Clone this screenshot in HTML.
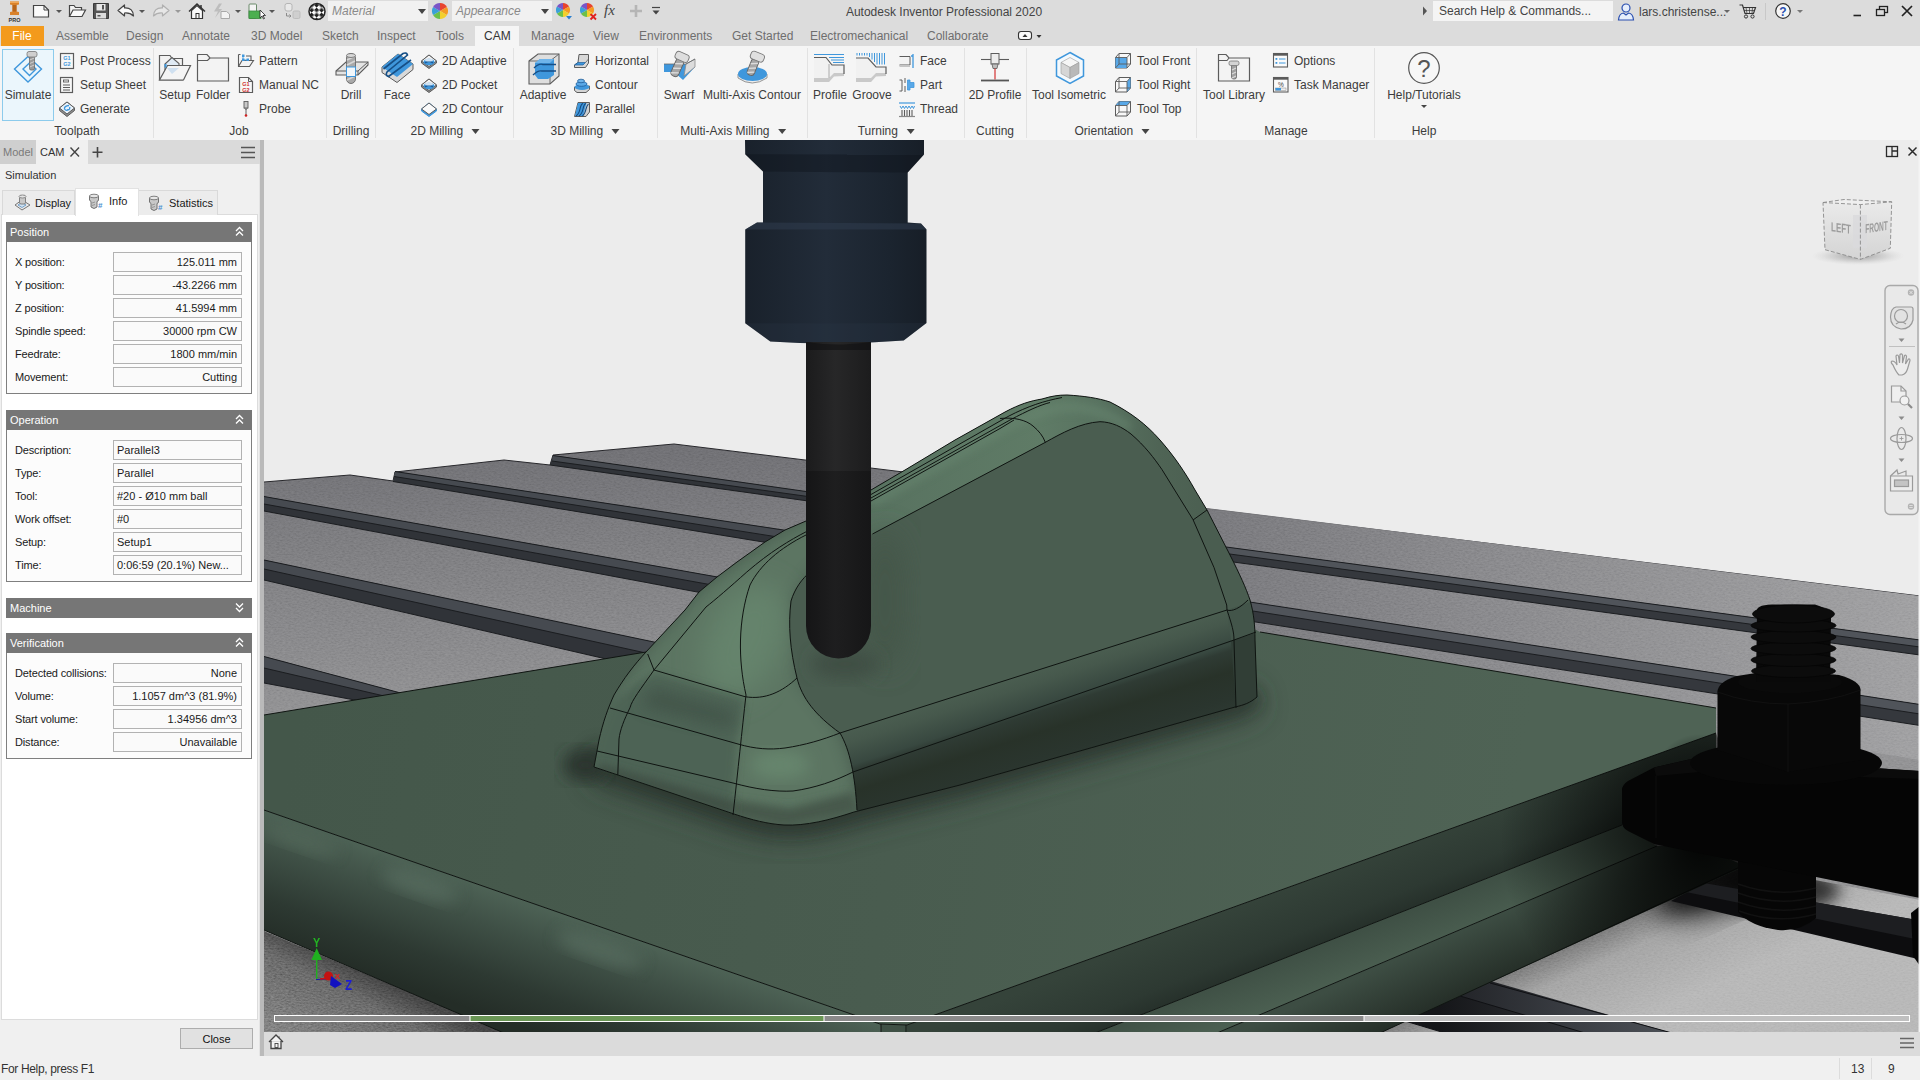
<!DOCTYPE html>
<html>
<head>
<meta charset="utf-8">
<title>Autodesk Inventor Professional 2020</title>
<style>
html,body{margin:0;padding:0;}
body{width:1920px;height:1080px;overflow:hidden;position:relative;background:#f0f0f0;font-family:"Liberation Sans",sans-serif;font-size:12px;color:#333;}
.abs{position:absolute;}
.t{position:absolute;white-space:nowrap;line-height:14px;}
#topbar{left:0;top:0;width:1920px;height:46px;background:#dcdcdc;}
#ribbon{left:0;top:46px;width:1920px;height:94px;background:#f5f5f5;}
.tab{position:absolute;top:28px;color:#6a6a6a;font-size:12px;line-height:14px;white-space:nowrap;}
.rb{position:absolute;font-size:12px;line-height:14px;color:#3c3c3c;white-space:nowrap;}
.rc{position:absolute;font-size:12px;line-height:14px;color:#3c3c3c;white-space:nowrap;transform:translateX(-50%);}
.sep{position:absolute;top:48px;width:1px;height:90px;background:#e2e2e2;}
#lpanel{left:0;top:140px;width:259px;height:916px;background:#f0f0f0;}
.fld{position:absolute;left:113px;width:127px;height:18px;border:1px solid #b2b2b2;background:#fafafa;font-size:11px;line-height:19px;color:#1a1a1a;white-space:nowrap;overflow:hidden;}
.fr{text-align:right;}
.fr span{padding-right:4px;}
.fl span{padding-left:3px;}
.lab{position:absolute;left:15px;font-size:11px;line-height:13px;color:#1a1a1a;white-space:nowrap;letter-spacing:-0.15px;}
.hdr{position:absolute;left:6px;width:246px;height:20px;background:#767676;color:#fff;font-size:11px;line-height:20px;}
.hdr span{padding-left:4px;}
.gb{position:absolute;left:6px;width:244px;border:1px solid #7f7f7f;border-top:none;background:#fcfcfc;}
</style>
</head>
<body>
<div id="topbar" class="abs"></div>
<div id="ribbon" class="abs"></div>
<div id="lpanel" class="abs"></div>
<svg class="abs" style="left:264px;top:140px" width="1656" height="892" viewBox="264 140 1656 892">
<defs>
<linearGradient id="gTable" gradientUnits="userSpaceOnUse" x1="500" y1="440" x2="1500" y2="1050">
<stop offset="0" stop-color="#6c6c70"/><stop offset="0.35" stop-color="#858588"/><stop offset="0.7" stop-color="#9c9c9e"/><stop offset="1" stop-color="#bdbdbd"/>
</linearGradient>
<linearGradient id="gHolder" gradientUnits="userSpaceOnUse" x1="745" y1="0" x2="926" y2="0">
<stop offset="0" stop-color="#19212b"/><stop offset="0.45" stop-color="#222c39"/><stop offset="0.8" stop-color="#1b242f"/><stop offset="1" stop-color="#171e27"/>
</linearGradient>
<linearGradient id="gTool" gradientUnits="userSpaceOnUse" x1="806" y1="0" x2="871" y2="0">
<stop offset="0" stop-color="#1b1b1c"/><stop offset="0.45" stop-color="#272728"/><stop offset="1" stop-color="#1c1c1d"/>
</linearGradient>
<linearGradient id="gTool2" gradientUnits="userSpaceOnUse" x1="806" y1="0" x2="871" y2="0">
<stop offset="0" stop-color="#151516"/><stop offset="0.45" stop-color="#1e1e1f"/><stop offset="1" stop-color="#161617"/>
</linearGradient>
<filter id="b4" x="-20%" y="-20%" width="140%" height="140%"><feGaussianBlur stdDeviation="4"/></filter>
<filter id="b8" x="-20%" y="-20%" width="140%" height="140%"><feGaussianBlur stdDeviation="8"/></filter>
<filter id="b14" x="-30%" y="-30%" width="160%" height="160%"><feGaussianBlur stdDeviation="14"/></filter>
<filter id="b25" x="-40%" y="-40%" width="180%" height="180%"><feGaussianBlur stdDeviation="25"/></filter>
<clipPath id="cBoss"><path d="M594,767 L599,740 C603,722 608,708 614,695 C624,678 634,665 646,652 L685,610 L699,592 L717,577 L737,562 L765,542 L785,530 L806,521 L871,490 L905,470 L955,440 L1005,412 C1020,404 1030,401 1042,399 C1052,396 1058,395 1067,395 C1084,396 1098,398 1110,402 C1130,412 1146,424 1160,440 C1174,456 1185,472 1195,490 L1207,510 L1230,555 C1240,575 1246,588 1250,600 C1254,614 1255,626 1255,640 L1257,697 C1250,703 1244,705 1235,707 L960,785 L854,812 C830,820 806,826 784,825 C768,824 752,820 734,814 Z"/></clipPath>
<clipPath id="cPlate"><path d="M264,715 L646,652 L700,600 L1200,600 L1260,632 L1716,708 L1716,733 L907,1025 L880,1024 L264,810 Z"/></clipPath>
<clipPath id="cView"><rect x="264" y="140" width="1656" height="892"/></clipPath>
</defs>
<g clip-path="url(#cView)">
<rect x="264" y="140" width="1656" height="892" fill="#ececec"/>
<g id="table">
<defs>
<linearGradient id="gSlotLR" gradientUnits="userSpaceOnUse" x1="1460" y1="0" x2="1680" y2="0"><stop offset="0" stop-color="#232529"/><stop offset="0.5" stop-color="#3a3d43"/><stop offset="1" stop-color="#4e5258"/></linearGradient>
<linearGradient id="gTableBack" gradientUnits="userSpaceOnUse" x1="1200" y1="0" x2="1920" y2="0"><stop offset="0" stop-color="#737377"/><stop offset="1" stop-color="#9b9b9d"/></linearGradient>
<linearGradient id="gTableV" gradientUnits="userSpaceOnUse" x1="0" y1="450" x2="0" y2="720"><stop offset="0" stop-color="#6b6b6f"/><stop offset="0.4" stop-color="#79797c"/><stop offset="1" stop-color="#8c8c8e"/></linearGradient>
<linearGradient id="gTableBL" gradientUnits="userSpaceOnUse" x1="380" y1="980" x2="340" y2="1060"><stop offset="0" stop-color="#3c3c3c"/><stop offset="0.3" stop-color="#5c5c5c"/><stop offset="1" stop-color="#707070"/></linearGradient>
<linearGradient id="gTableLR" gradientUnits="userSpaceOnUse" x1="1560" y1="949" x2="1600" y2="1037"><stop offset="0" stop-color="#747474"/><stop offset="0.3" stop-color="#a0a0a0"/><stop offset="1" stop-color="#b4b4b4"/></linearGradient>
<radialGradient id="gUnderClamp" gradientUnits="userSpaceOnUse" cx="1740" cy="870" r="120"><stop offset="0" stop-color="#000" stop-opacity="0.85"/><stop offset="0.5" stop-color="#000" stop-opacity="0.4"/><stop offset="1" stop-color="#000" stop-opacity="0"/></radialGradient>
<clipPath id="cTableLR"><path d="M1380,1033 L1742,866 L1815,880 L1920,900 L1920,1033 Z"/></clipPath>
<linearGradient id="gSlotLR2" gradientUnits="userSpaceOnUse" x1="1440" y1="0" x2="1640" y2="0"><stop offset="0" stop-color="#151619"/><stop offset="0.5" stop-color="#2a2c30"/><stop offset="1" stop-color="#3c3f45"/></linearGradient>
<filter id="noise" x="0" y="0" width="100%" height="100%"><feTurbulence type="fractalNoise" baseFrequency="0.35 0.7" numOctaves="2" seed="7"/><feColorMatrix type="matrix" values="0.9 0 0 0 0  0.9 0 0 0 0  0.9 0 0 0 0  0 0 0 0 1"/></filter>
<clipPath id="cTableAll"><path d="M264,482 L350,475 L393,481 L395,472 L504,460 L550,465 L553,455 L674,444 L1920,596 L1920,1033 L264,1033 Z"/></clipPath>
</defs>
<path d="M264,482 L350,475 L393,481 L395,472 L504,460 L550,465 L553,455 L674,444 L1920,596 L1920,1033 L264,1033 Z" fill="url(#gTableV)"/>
<path d="M264,931 L506,1033 L264,1033 Z" fill="url(#gTableBL)"/>
<g style="mix-blend-mode:overlay" opacity="0.25"><path d="M264,931 L506,1033 L264,1033 Z" filter="url(#noise)"/></g>
<path d="M1300,1033 L1700,840 L1815,880 L1920,900 L1920,1033 Z" fill="url(#gTableLR)"/>
<path d="M264,482 L350,475 L393,481 L395,472 L504,460 L550,465 L553,455 L674,444 L1920,596" fill="none" stroke="#26262a" stroke-width="1"/>
<path d="M1190,506 L1920,596 L1920,760 L1190,640 Z" fill="url(#gTableBack)"/>
<g clip-path="url(#cTableAll)" style="mix-blend-mode:overlay" opacity="0.16"><rect x="264" y="440" width="1656" height="593" filter="url(#noise)"/></g>
<!-- slot 2-3 -->
<path d="M553,455.5 L880,502 L880,511 L550,465 Z" fill="#303338"/>
<path d="M553,455.5 L880,502 L880,506.5 L552,461 Z" fill="#464a50"/>
<!-- slot 1-2 -->
<path d="M395,471.5 L800,532.5 L800,548 L393,481.5 Z" fill="#303338"/>
<path d="M395,471.5 L800,532.5 L800,540.5 L394,476.5 Z" fill="#464a50"/>
<!-- slot 0-1 -->
<path d="M264,496.5 L740,581 L740,600 L264,511 Z" fill="#303338"/>
<path d="M264,496.5 L740,581 L740,590 L264,504 Z" fill="#464a50"/>
<!-- slot -1-0 -->
<path d="M264,560 L680,647.5 L680,676 L264,580 Z" fill="#303338"/>
<path d="M264,560 L680,647.5 L680,660.5 L264,569 Z" fill="#464a50"/>
<!-- slot -2 -1 -->
<path d="M264,656.500 L440,703.500 L440,716 L264,683 Z" fill="#303338"/>
<path d="M264,656.500 L440,703.500 L440,709 L264,668 Z" fill="#464a50"/>
<g fill="none" stroke="#1b1d20" stroke-width="1">
<path d="M553,455.5 L880,502 M552,461 L880,506.5 M550,465 L880,511"/>
<path d="M395,471.5 L800,532.5 M394,476.5 L800,540.5 M393,481.5 L800,548"/>
<path d="M264,496.5 L740,581 M264,504 L740,590 M264,511 L740,600"/>
<path d="M264,560 L680,647.5 M264,569 L680,660.5 M264,580 L680,676"/>
<path d="M264,656.500 L440,703.500 M264,668 L440,709 M264,683 L440,716"/>
</g>
<!-- right slots -->
<path d="M1200,543.5 L1920,640 L1920,655 L1200,557.5 Z" fill="#35383d"/>
<path d="M1200,543.5 L1920,640 L1920,647 L1200,550 Z" fill="#50545a"/>
<path d="M1230,599 L1920,704.5 L1920,725.5 L1230,618 Z" fill="#35383d"/>
<path d="M1230,599 L1920,704.5 L1920,714 L1230,607.5 Z" fill="#50545a"/>
<g fill="none" stroke="#1b1d20" stroke-width="1">
<path d="M1200,543.5 L1920,640 M1200,550 L1920,647 M1200,557.5 L1920,655"/>
<path d="M1230,599 L1920,704.5 M1230,607.5 L1920,714 M1230,618 L1920,725.5"/>
</g>
<g clip-path="url(#cTableLR)"><ellipse cx="1735" cy="872" rx="85" ry="30" fill="#000" opacity="0.9" filter="url(#b14)" transform="rotate(-24 1735 872)"/><ellipse cx="1780" cy="890" rx="60" ry="22" fill="#000" opacity="0.7" filter="url(#b8)"/></g>
<!-- lower right slots -->
<path d="M1704,883 L1920,920.500 L1920,959.500 L1671,901 Z" fill="#0d0d0f"/>
<path d="M1704,883 L1920,920.500 L1920,940 L1686,892 Z" fill="#1d1e21"/>
<path d="M1480,978 L1672,1033 L1445,1033 L1395,1018 Z" fill="url(#gSlotLR2)"/>
<path d="M1480,978 L1490,983 L1672,1033 L1585,1033 L1460,996 L1450,990 Z" fill="url(#gSlotLR)"/>
<path d="M1490,983 L1672,1033 M1460,996 L1585,1033 M1405,1021 L1445,1033" stroke="#101114" stroke-width="1" fill="none"/>
</g>

<g id="plate">
<defs>
<linearGradient id="gPlateTop" gradientUnits="userSpaceOnUse" x1="300" y1="700" x2="1500" y2="900">
<stop offset="0" stop-color="#44574a"/><stop offset="0.5" stop-color="#495c4f"/><stop offset="1" stop-color="#4f6355"/>
</linearGradient>
<linearGradient id="gPlateFront" gradientUnits="userSpaceOnUse" x1="600" y1="925" x2="560" y2="1040">
<stop offset="0" stop-color="#4e6356"/><stop offset="0.3" stop-color="#3f5046"/><stop offset="0.7" stop-color="#2d3932"/><stop offset="1" stop-color="#242d27"/>
</linearGradient>
<linearGradient id="gFace1" gradientUnits="userSpaceOnUse" x1="1300" y1="880" x2="1330" y2="955">
<stop offset="0" stop-color="#35433a"/><stop offset="0.6" stop-color="#2d3932"/><stop offset="1" stop-color="#212a25"/>
</linearGradient>
<linearGradient id="gLedge" gradientUnits="userSpaceOnUse" x1="1400" y1="915" x2="1415" y2="955">
<stop offset="0" stop-color="#3f5045"/><stop offset="1" stop-color="#4b5f51"/>
</linearGradient>
<linearGradient id="gFace2" gradientUnits="userSpaceOnUse" x1="1450" y1="935" x2="1480" y2="1000">
<stop offset="0" stop-color="#3d4d43"/><stop offset="1" stop-color="#212923"/>
</linearGradient>
<radialGradient id="gClampSh" gradientUnits="userSpaceOnUse" cx="1700" cy="840" r="200">
<stop offset="0" stop-color="#000" stop-opacity="0.95"/><stop offset="0.45" stop-color="#000" stop-opacity="0.55"/><stop offset="1" stop-color="#000" stop-opacity="0"/>
</radialGradient>
<radialGradient id="gClampSh2" gradientUnits="userSpaceOnUse" cx="1700" cy="782" r="48">
<stop offset="0" stop-color="#000" stop-opacity="0.9"/><stop offset="0.5" stop-color="#000" stop-opacity="0.45"/><stop offset="1" stop-color="#000" stop-opacity="0"/>
</radialGradient>
</defs>
<!-- top -->
<path d="M264,715 L646,652 L700,600 L1200,600 L1260,632 L1716,708 L1716,733 L907,1025 L880,1024 L264,810 Z" fill="url(#gPlateTop)"/>
<g clip-path="url(#cPlate)">
<path d="M594,767 L734,814 C752,820 768,824 784,825 C806,826 830,820 854,812 L960,785 L1235,707 L1257,697" fill="none" stroke="#2d3932" stroke-width="30" filter="url(#b14)" opacity="0.7"/>
<path d="M596,750 L594,767 L734,814 C752,820 768,824 784,825 C806,826 830,820 854,812 L960,785 L1235,707 L1257,697" fill="none" stroke="#27322c" stroke-width="12" filter="url(#b8)" opacity="0.9"/>
<ellipse cx="585" cy="765" rx="22" ry="16" fill="#2a352e" filter="url(#b8)"/>
</g>
<!-- front-left face -->
<path d="M264,810 L880,1024 L881,1033 L504,1033 L264,930 Z" fill="url(#gPlateFront)"/>
<g opacity="0.8">
<ellipse cx="420" cy="885" rx="40" ry="12" fill="#566c5e" filter="url(#b8)" transform="rotate(19 420 885)"/>
<ellipse cx="600" cy="950" rx="45" ry="12" fill="#566c5e" filter="url(#b8)" transform="rotate(19 600 950)"/>
<ellipse cx="300" cy="840" rx="40" ry="10" fill="#52685a" filter="url(#b8)" transform="rotate(19 300 840)"/>
</g>
<!-- corner -->
<path d="M880,1024 L907,1025 L907,1033 L881,1033 Z" fill="#3f5045"/>
<!-- right faces -->
<path d="M907,1025 L1716,733 L1716,790 L1622,825 L1095,1033 L907,1033 Z" fill="url(#gFace1)"/>
<path d="M1095,1033 L1622,825 L1657,846 L1217,1033 Z" fill="url(#gLedge)"/>
<path d="M1217,1033 L1657,846 L1700,846 L1745,866 L1380,1033 Z" fill="url(#gFace2)"/>
<g fill="none" stroke="#101512" stroke-width="1">
<path d="M264,715 L646,652"/>
<path d="M1260,632 L1716,708"/>
<path d="M264,810 L880,1024 L907,1025 L1716,733"/>
<path d="M881,1024 L881,1033 M906,1025 L906,1033"/>
<path d="M1095,1033 L1622,825"/>
<path d="M1217,1033 L1657,846"/>
<path d="M1380,1033 L1742,866"/>
<path d="M264,930 L504,1033"/>
</g>
<!-- clamp shadow -->
<path d="M907,1025 L1716,733 L1760,850 L1745,866 L1380,1033 L907,1033 Z" fill="url(#gClampSh)"/>
<path d="M1400,655 L1716,708 L1716,733 L1450,829 Z" fill="url(#gClampSh2)"/>
</g>

<g id="boss">
<defs>
<linearGradient id="gSkirt" gradientUnits="userSpaceOnUse" x1="1000" y1="682" x2="1030.300" y2="777.300">
<stop offset="0" stop-color="#4a5d50"/><stop offset="0.12" stop-color="#46584c"/><stop offset="0.34" stop-color="#384840"/><stop offset="0.4" stop-color="#2f3b34"/><stop offset="0.6" stop-color="#283229"/><stop offset="0.85" stop-color="#2a352e"/><stop offset="1" stop-color="#2d3932"/>
</linearGradient>
<linearGradient id="gSkirtR" gradientUnits="userSpaceOnUse" x1="1180" y1="0" x2="1234" y2="0">
<stop offset="0" stop-color="#46594c" stop-opacity="0"/><stop offset="1" stop-color="#46594c" stop-opacity="0.9"/>
</linearGradient>
<linearGradient id="gRidge" gradientUnits="userSpaceOnUse" x1="870" y1="0" x2="1210" y2="0">
<stop offset="0" stop-color="#587260"/><stop offset="0.5" stop-color="#5f7b66"/><stop offset="0.68" stop-color="#587260"/><stop offset="0.85" stop-color="#4f6455"/><stop offset="1" stop-color="#4b5f51"/>
</linearGradient>
</defs>
<g clip-path="url(#cBoss)">
<rect x="580" y="380" width="700" height="460" fill="#4a5d50"/>
<!-- left slope lighter -->
<path d="M594,767 L614,695 L646,652 L699,592 L765,542 L806,521 L871,490 L1005,412 L1067,395 L1067,427 L874,531 L810,572 L791,601 L797,678 L840,733 L853,772 L857,810 L784,825 L734,814 Z" fill="#5b7562" filter="url(#b8)"/>
<ellipse cx="745" cy="640" rx="38" ry="60" fill="#65836c" filter="url(#b14)" transform="rotate(25 745 640)"/>
<ellipse cx="780" cy="765" rx="30" ry="14" fill="#66856d" filter="url(#b8)"/>
<ellipse cx="790" cy="810" rx="40" ry="8" fill="#5c7763" filter="url(#b4)"/>
<!-- darker fillet zones on left front -->
<path d="M654,672 L745,699 L737,744 L734,787 L733,818 L590,772 L597,738 L610,704 L630,688 Z" fill="#4e6355" filter="url(#b4)"/>
<path d="M652,688 L735,712 L732,728 L642,706 Z" fill="#43554a" filter="url(#b8)"/>
<path d="M733,800 L790,808 L853,792 L857,812 L784,827 L733,816 Z" fill="#46594c" filter="url(#b4)"/>
<path d="M600,764 L735,802 L734,816 L594,772 Z" fill="#3f5045" filter="url(#b4)"/>
<!-- top ridge highlight -->
<path d="M860,496 L905,470 L955,440 L1005,412 C1020,404 1030,401 1042,399 C1052,396 1058,395 1067,395 C1084,396 1098,398 1110,402 C1130,412 1146,424 1160,440 C1174,456 1185,472 1195,490 L1207,510 L1193,519.6 L1162,469.6 C1154,458 1145,446 1131,434 C1122,427 1112,422 1100,421.7 C1080,423 1062,433 1045,442.5 L860,540 Z" fill="url(#gRidge)"/>
<path d="M871,503 L1010,425 C1030,415 1050,408 1068,407 C1090,407 1110,414 1130,428" fill="none" stroke="#6a8972" stroke-width="9" opacity="0.55" filter="url(#b4)"/>
<!-- big side face -->
<path d="M872.5,534 L1045,442.5 C1062,433 1080,423 1100,421.7 C1112,422 1122,427 1131,434 C1145,446 1154,458 1162,469.6 L1193,519.6 L1214,567.5 L1226.7,605 L1227,610 L840,733 C815,715 802,698 797,678 C790,650 788,625 791,601 C795,588 802,579 810,572 Z" fill="#4a5d50"/>
<!-- tool shadow -->
<ellipse cx="885" cy="600" rx="22" ry="70" fill="#44564a" filter="url(#b14)"/>
<ellipse cx="845" cy="664" rx="34" ry="16" fill="#3f5045" filter="url(#b8)"/>
<!-- skirt bands -->
<path d="M840,733 L1227,610 L1265,700 L857,818 C857,790 852,755 840,733 Z" fill="url(#gSkirt)"/>
<path d="M1227,610 L1256,600 L1258,632 L1231,641 Z" fill="#43554a"/>
<path d="M1231,641 L1258,632 L1262,700 L1236,708 Z" fill="#313e36"/>
</g>
<g fill="none" stroke="#0f1411" stroke-width="1">
<path d="M594,767 L599,740 C603,722 608,708 614,695 C624,678 634,665 646,652 L685,610 L699,592 L717,577 L737,562 L765,542 L785,530 L806,521 L871,490 L905,470 L955,440 L1005,412 C1020,404 1030,401 1042,399 C1052,396 1058,395 1067,395 C1084,396 1098,398 1110,402 C1130,412 1146,424 1160,440 C1174,456 1185,472 1195,490 L1207,510 L1230,555 C1240,575 1246,588 1250,600 C1254,614 1255,626 1255,640 L1257,697 C1250,703 1244,705 1235,707 L960,785 L854,812 C830,820 806,826 784,825 C768,824 752,820 734,814 Z"/>
<!-- side face outline -->
<path d="M872.5,534 L1045,442.5 C1062,433 1080,423 1100,421.7 C1112,422 1122,427 1131,434 C1145,446 1154,458 1162,469.6 L1193,519.6 L1214,567.5 L1226.7,605 L1227,610 L840,733 C815,715 802,698 797,678 C790,650 788,625 791,601 C795,588 802,579 810,572"/>
<!-- upper edge second line -->
<path d="M871,494.500 L1008,416.500 C1028,406 1044,401 1062,397.500"/>
<path d="M871,498 L1010,420 C1028,410.500 1040,405 1050,402.500"/>
<path d="M871,501 L1000,428.500 L1014,420"/>
<path d="M1000,418.500 C1014,417 1026,420 1033,426 C1039,431 1043,436 1045.400,442.500"/>
<path d="M1193,520 L1207,510"/>
<path d="M1227,610 C1232,612 1240,608 1248,600"/>
<path d="M1227,610 C1232,625 1234,632 1234,640 L1236,708"/>
<path d="M853,772 L1234,640 L1256,632"/>
<!-- left front lines -->
<path d="M654,670 L745,696.700 C765,700 782,692 797,678"/>
<path d="M647.700,654 L654,670"/>
<path d="M610,708 L738,744 C755,749 770,750 785,748 C805,745 822,740 840,733"/>
<path d="M597,751 L733,783 C755,789 775,792 793,791 C815,788 835,781 853,772"/>
<path d="M654,670 C640,690 632,700 630,707.700 C624,720 620,730 619,739 L617.800,775"/>
<path d="M746,695 C742,730 738,770 733,815"/>
<path d="M840,733 C850,750 855,775 857,810"/>
<path d="M654,670 L706,607 C715,600 730,587 746.800,572 C770,552 790,540 806.600,531.500"/>
<path d="M746,695 C738,660 738,620 750,585 C760,565 780,548 806,535"/>
</g>
</g>

<g id="tool">
<path d="M745,140 L924,140 L924,154.500 L907.700,172.500 L907.700,222.500 L921,223.500 L926.500,229.600 L926.500,323 L903.700,340.600 Q835,346 770.300,341.600 L745.200,323.300 L745.200,229.600 L757,222.500 L763,222.500 L763,171.600 L745.200,154.300 Z" fill="url(#gHolder)"/>
<path d="M745.200,154.300 L763,171.600 L907.700,172.500 L924,154.500 Z" fill="#0d1218" opacity="0.4"/>
<path d="M757,222.500 L921,223.500 L926.500,229.600 L745.200,229.600 Z" fill="#303d4e" opacity="0.55"/>
<path d="M745.200,323.300 L926.500,323 L903.700,340.600 Q835,346 770.300,341.600 Z" fill="#2a3646" opacity="0.25"/>
<rect x="806" y="342" width="65" height="130" fill="url(#gTool)"/>
<path d="M806,471 L871,471 L871,626 A32.500,32.500 0 0 1 806,626 Z" fill="url(#gTool2)"/>
<path d="M806,342 Q838,347 871,342 L871,350 L806,350 Z" fill="#0c0c0d" opacity="0.5"/>
</g>

<g id="clamp">
<!-- lower bolt -->
<path d="M1738,850 L1816,850 L1816,918 Q1800,932 1778,930 Q1750,926 1738,912 Z" fill="#060606"/>
<g fill="none" stroke="#111" stroke-width="1.5">
<path d="M1738,884 Q1777,898 1816,888"/><path d="M1738,893 Q1777,907 1816,897"/><path d="M1738,902 Q1777,916 1816,906"/><path d="M1739,911 Q1777,925 1816,914"/>
</g>
<!-- clamp bar -->
<path d="M1622,790 Q1622,785 1628,781 L1654,767.500 L1700,757 L1920,771 L1920,898 L1654,844 L1628,831 Q1622,828 1622,822 Z" fill="#050505"/>
<path d="M1654,767.500 L1700,757 L1920,771 L1920,779 L1700,772 L1656,776 Z" fill="#0b0b0b"/>
<path d="M1656,776 L1656,838" stroke="#0e0e0e" stroke-width="1"/>
<!-- washer -->
<ellipse cx="1786" cy="763" rx="96" ry="22" fill="#070707"/>
<!-- nut -->
<path d="M1717.500,692 Q1717.500,682 1737,676 L1775,670 L1839,675 Q1860.500,681 1860.500,690 L1860.500,760 L1788,772 L1717.500,750 Z" fill="#080808"/>
<path d="M1788,704 L1788,772" stroke="#101010" stroke-width="1"/>
<path d="M1717.500,692 Q1750,704 1788,704 Q1830,702 1860.500,690" fill="none" stroke="#111" stroke-width="1"/>
<ellipse cx="1790" cy="682" rx="52" ry="11" fill="#0a0a0a"/>
<!-- thread -->
<path d="M1757,612 Q1755,605 1772,604.500 L1815,604.500 Q1833,610 1831,618 L1830,682 L1756,682 Z" fill="#090909"/>
<g fill="#0c0c0c" stroke="#050505" stroke-width="0.8">
<ellipse cx="1793.500" cy="671" rx="42" ry="6.500"/>
<ellipse cx="1793.500" cy="660" rx="42.500" ry="6.500"/>
<ellipse cx="1793.500" cy="648.500" rx="42.500" ry="6.500"/>
<ellipse cx="1793.500" cy="637" rx="42.500" ry="6.500"/>
<ellipse cx="1793.500" cy="625.500" rx="42.500" ry="6.500"/>
<ellipse cx="1793.500" cy="614" rx="41" ry="9"/>
</g>
<path d="M1911,913 L1920,906 L1920,966 L1913,956 Z" fill="#050505"/>
</g>

<g id="overlay">
<!-- triad -->
<g>
<path d="M316.7,959 L316.7,979" stroke="#1fb01f" stroke-width="1.4"/>
<path d="M316.7,948 L322,960 L311.4,960 Z" fill="#1fb01f"/>
<text x="0" y="0" font-family="Liberation Sans, sans-serif" font-size="12" font-weight="bold" fill="#22b422" text-anchor="middle" transform="translate(316.500 947) scale(0.9 1)">Y</text>
<path d="M316,979.5 L328,979" stroke="#1a1aa8" stroke-width="1.2"/>
<path d="M320,979 L331,978" stroke="#c81414" stroke-width="1.6"/>
<ellipse cx="328.5" cy="976" rx="4.5" ry="4.5" fill="#c41212"/>
<text x="337.5" y="979" font-family="Liberation Sans, sans-serif" font-size="8" font-weight="bold" fill="#e02020" text-anchor="middle">X</text>
<path d="M331,976 L342,984 L335,988 L330,985 Z" fill="#1212c0"/>
<text x="0" y="0" font-family="Liberation Sans, sans-serif" font-size="15" font-weight="bold" fill="#1c1cd8" text-anchor="middle" transform="translate(348.800 990) scale(0.75 1)">Z</text>
</g>
<!-- progress bar -->
<g>
<rect x="274.5" y="1015.5" width="1635" height="6" fill="#c0c0c0" stroke="#ffffff" stroke-width="1"/>
<rect x="275" y="1016" width="195" height="5" fill="#8c8c8c"/>
<rect x="470" y="1016" width="354" height="5" fill="#6a9655"/>
<rect x="824" y="1016" width="540" height="5" fill="#8a8a8a"/>
<rect x="469.5" y="1015" width="1" height="7" fill="#fff"/>
<rect x="823.5" y="1015" width="1" height="7" fill="#fff"/>
<rect x="1363.5" y="1015" width="1" height="7" fill="#fff"/>
</g>
<!-- right white strip -->
<rect x="1918.500" y="140" width="1.500" height="892" fill="#f4f4f4"/>
<!-- top-right icons -->
<g fill="none" stroke="#2a2a2a" stroke-width="1.3">
<rect x="1886.5" y="146.5" width="11" height="10"/>
<path d="M1892,146.5 L1892,156.5 M1892,151 L1897.5,151"/>
<path d="M1908.5,147.5 L1916.5,155.5 M1916.5,147.5 L1908.5,155.5" stroke-width="1.5"/>
</g>
<!-- view cube -->
<g>
<defs>
<radialGradient id="gCubeSh" cx="0.5" cy="0.5" r="0.5"><stop offset="0" stop-color="#8a8a8a" stop-opacity="0.85"/><stop offset="0.6" stop-color="#b0b0b0" stop-opacity="0.4"/><stop offset="1" stop-color="#d0d0d0" stop-opacity="0"/></radialGradient>
<linearGradient id="gCubeL" x1="0" y1="0" x2="0" y2="1"><stop offset="0" stop-color="#eaeaea"/><stop offset="1" stop-color="#d4d4d4"/></linearGradient>
</defs>
<ellipse cx="1858" cy="256" rx="46" ry="9" fill="url(#gCubeSh)"/>
<path d="M1823,202.5 L1860.4,204.6 L1860.4,259.4 L1825,249.7 Z" fill="url(#gCubeL)"/>
<path d="M1860.4,204.6 L1891.7,201.8 L1890.3,248.3 L1860.4,259.4 Z" fill="url(#gCubeL)"/>
<path d="M1823,202.5 L1844,199.5 L1891.7,201.8 L1860.4,204.6 Z" fill="#efefef"/>
<rect x="1853" y="215" width="14" height="33" fill="#d9dadc" opacity="0.8"/>
<g fill="none" stroke="#8a8a8a" stroke-width="0.9" stroke-dasharray="4 2">
<path d="M1823,202.5 L1860.4,204.6 L1891.7,201.8 L1890.3,248.3 L1860.4,259.4 L1825,249.7 Z"/>
<path d="M1860.4,204.6 L1860.4,259.4"/>
<path d="M1823,202.5 L1844,199.5 L1891.7,201.8"/>
</g>
<text x="0" y="3.500" font-family="Liberation Sans, sans-serif" font-size="10" font-weight="bold" fill="#9c9c9c" text-anchor="middle" transform="translate(1841 228) skewY(7) scale(0.8 1.3)">LEFT</text>
<text x="0" y="3.500" font-family="Liberation Sans, sans-serif" font-size="10" font-weight="bold" fill="#9c9c9c" text-anchor="middle" transform="translate(1876.500 227) skewY(-9) scale(0.66 1.3)">FRONT</text>
</g>
<!-- nav bar -->
<g>
<rect x="1885" y="285.5" width="33" height="229" rx="5" ry="5" fill="#e9e9e9" stroke="#a9a9a9" stroke-width="1.4"/>
<circle cx="1911" cy="292.5" r="3.2" fill="#b4b4b4"/><path d="M1909.5,291 L1912.5,294 M1912.5,291 L1909.5,294" stroke="#eee" stroke-width="0.8"/>
<circle cx="1911" cy="506.5" r="3.2" fill="#b4b4b4"/><path d="M1909.3,505.5 L1912.7,505.5 M1909.3,507.5 L1912.7,507.5" stroke="#eee" stroke-width="0.7"/>
<g fill="none" stroke="#9a9a9a" stroke-width="1.2">
<path d="M1896,307 L1911,307 Q1913,307 1913,309 L1913,320 Q1911,329 1901,329 Q1890.500,327 1890.500,317 Q1891,308 1896,307 Z" fill="#e2e2e2"/>
<circle cx="1901" cy="316" r="6.5"/>
<path d="M1896,324 Q1901,320 1906,324"/>
<path d="M1889,346.500 L1915,346.500" stroke-width="0.8" stroke="#b5b5b5"/>
<!-- hand -->
<path d="M1893,365 Q1890,362 1892,361 Q1895,361 1897,365 L1896,356 Q1897,354 1898.500,356 L1899.500,363 L1900,354.500 Q1901.500,353 1902.500,355 L1902.500,363 L1904.500,355.500 Q1906,354.500 1906.500,356.500 L1905.500,364 L1908.500,359 Q1910,358.500 1910,360.500 L1907.500,369 Q1906,374 1902,375 L1899,375 Q1896,372 1893,365 Z" fill="#ededed"/>
<!-- page zoom -->
<path d="M1891.500,386 L1901,386 L1906,391 L1906,402 L1891.500,402 Z" fill="#efefef"/>
<path d="M1901,386 L1901,391 L1906,391"/>
<circle cx="1904.500" cy="400.500" r="4.500" fill="#f2f2f2"/>
<path d="M1908,404 L1912,408" stroke-width="2.2" stroke="#8a8a8a"/>
<!-- orbit -->
<ellipse cx="1901.500" cy="438.500" rx="11" ry="4"/>
<ellipse cx="1901.500" cy="438.500" rx="4.500" ry="11"/>
<path d="M1899.500,438.500 L1903.500,438.500 M1901.500,436.500 L1901.500,440.500" stroke-width="0.9"/>
<!-- camera -->
<path d="M1890.500,476 L1912.500,476 L1912.500,491 L1890.500,491 Z" fill="#ececec"/>
<path d="M1890.500,476 L1897,470 L1898,474 L1906,471 L1906,476"/>
<rect x="1894.500" y="480" width="14" height="6.500" fill="#c4c4c4"/>
</g>
<g fill="#8c8c8c">
<path d="M1898.500,338.500 L1904.500,338.500 L1901.500,342 Z"/>
<path d="M1898.500,416.500 L1904.500,416.500 L1901.500,420 Z"/>
<path d="M1898.500,458.500 L1904.500,458.500 L1901.500,462 Z"/>
</g>
</g>
</g>

</g>
</svg>

<div class="abs" style="left:1px;top:26px;width:43px;height:20px;background:#f39a1c;"></div>
<div class="abs" style="left:475px;top:26px;width:44px;height:20px;background:#f5f5f5;"></div>
<div class="rc" style="left:22px;top:29px;color:#fff;">File</div>
<div class="rb" style="left:56px;top:29px;color:#6e6e6e;">Assemble</div>
<div class="rb" style="left:126px;top:29px;color:#6e6e6e;">Design</div>
<div class="rb" style="left:182px;top:29px;color:#6e6e6e;">Annotate</div>
<div class="rb" style="left:251px;top:29px;color:#6e6e6e;">3D Model</div>
<div class="rb" style="left:322px;top:29px;color:#6e6e6e;">Sketch</div>
<div class="rb" style="left:377px;top:29px;color:#6e6e6e;">Inspect</div>
<div class="rb" style="left:436px;top:29px;color:#6e6e6e;">Tools</div>
<div class="rb" style="left:484px;top:29px;color:#333;">CAM</div>
<div class="rb" style="left:531px;top:29px;color:#6e6e6e;">Manage</div>
<div class="rb" style="left:593px;top:29px;color:#6e6e6e;">View</div>
<div class="rb" style="left:639px;top:29px;color:#6e6e6e;">Environments</div>
<div class="rb" style="left:732px;top:29px;color:#6e6e6e;">Get Started</div>
<div class="rb" style="left:810px;top:29px;color:#6e6e6e;">Electromechanical</div>
<div class="rb" style="left:927px;top:29px;color:#6e6e6e;">Collaborate</div>
<div class="rc" style="left:944px;top:5px;color:#444;">Autodesk Inventor Professional 2020</div>
<div class="abs" style="left:1433px;top:1px;width:180px;height:20px;background:#f4f4f4;"></div>
<div class="rb" style="left:1439px;top:4px;color:#444;">Search Help &amp; Commands...</div>
<div class="rb" style="left:1639px;top:5px;color:#444;">lars.christense...</div>
<div class="rb" style="left:80px;top:53.5px;">Post Process</div>
<div class="rb" style="left:80px;top:77.5px;">Setup Sheet</div>
<div class="rb" style="left:80px;top:101.5px;">Generate</div>
<div class="rb" style="left:259px;top:53.5px;">Pattern</div>
<div class="rb" style="left:259px;top:77.5px;">Manual NC</div>
<div class="rb" style="left:259px;top:101.5px;">Probe</div>
<div class="rb" style="left:442px;top:53.5px;">2D Adaptive</div>
<div class="rb" style="left:442px;top:77.5px;">2D Pocket</div>
<div class="rb" style="left:442px;top:101.5px;">2D Contour</div>
<div class="rb" style="left:595px;top:53.5px;">Horizontal</div>
<div class="rb" style="left:595px;top:77.5px;">Contour</div>
<div class="rb" style="left:595px;top:101.5px;">Parallel</div>
<div class="rb" style="left:920px;top:53.5px;">Face</div>
<div class="rb" style="left:920px;top:77.5px;">Part</div>
<div class="rb" style="left:920px;top:101.5px;">Thread</div>
<div class="rb" style="left:1137px;top:53.5px;">Tool Front</div>
<div class="rb" style="left:1137px;top:77.5px;">Tool Right</div>
<div class="rb" style="left:1137px;top:101.5px;">Tool Top</div>
<div class="rb" style="left:1294px;top:53.5px;">Options</div>
<div class="rb" style="left:1294px;top:77.5px;">Task Manager</div>
<div class="abs" style="left:2px;top:49px;width:50px;height:70px;border:1px solid #8ccbec;background:#ebf6fc;"></div>
<div class="rc" style="left:28px;top:87.5px;">Simulate</div>
<div class="rc" style="left:175px;top:87.5px;">Setup</div>
<div class="rc" style="left:213px;top:87.5px;">Folder</div>
<div class="rc" style="left:351px;top:87.5px;">Drill</div>
<div class="rc" style="left:397px;top:87.5px;">Face</div>
<div class="rc" style="left:543px;top:87.5px;">Adaptive</div>
<div class="rc" style="left:679px;top:87.5px;">Swarf</div>
<div class="rc" style="left:752px;top:87.5px;">Multi-Axis Contour</div>
<div class="rc" style="left:830px;top:87.5px;">Profile</div>
<div class="rc" style="left:872px;top:87.5px;">Groove</div>
<div class="rc" style="left:995px;top:87.5px;">2D Profile</div>
<div class="rc" style="left:1069px;top:87.5px;">Tool Isometric</div>
<div class="rc" style="left:1234px;top:87.5px;">Tool Library</div>
<div class="rc" style="left:1424px;top:87.5px;">Help/Tutorials</div>
<div class="rc" style="left:77px;top:124px;">Toolpath</div>
<div class="rc" style="left:239px;top:124px;">Job</div>
<div class="rc" style="left:351px;top:124px;">Drilling</div>
<div class="rc" style="left:445px;top:124px;">2D Milling <span style="display:inline-block;width:0;height:0;border-left:4px solid transparent;border-right:4px solid transparent;border-top:5px solid #444;margin-left:5px;vertical-align:1px;"></span></div>
<div class="rc" style="left:585px;top:124px;">3D Milling <span style="display:inline-block;width:0;height:0;border-left:4px solid transparent;border-right:4px solid transparent;border-top:5px solid #444;margin-left:5px;vertical-align:1px;"></span></div>
<div class="rc" style="left:733px;top:124px;">Multi-Axis Milling <span style="display:inline-block;width:0;height:0;border-left:4px solid transparent;border-right:4px solid transparent;border-top:5px solid #444;margin-left:5px;vertical-align:1px;"></span></div>
<div class="rc" style="left:886px;top:124px;">Turning <span style="display:inline-block;width:0;height:0;border-left:4px solid transparent;border-right:4px solid transparent;border-top:5px solid #444;margin-left:5px;vertical-align:1px;"></span></div>
<div class="rc" style="left:995px;top:124px;">Cutting</div>
<div class="rc" style="left:1112px;top:124px;">Orientation <span style="display:inline-block;width:0;height:0;border-left:4px solid transparent;border-right:4px solid transparent;border-top:5px solid #444;margin-left:5px;vertical-align:1px;"></span></div>
<div class="rc" style="left:1286px;top:124px;">Manage</div>
<div class="rc" style="left:1424px;top:124px;">Help</div>
<div class="sep" style="left:153px;"></div>
<div class="sep" style="left:326px;"></div>
<div class="sep" style="left:375px;"></div>
<div class="sep" style="left:513px;"></div>
<div class="sep" style="left:657px;"></div>
<div class="sep" style="left:807px;"></div>
<div class="sep" style="left:964px;"></div>
<div class="sep" style="left:1026px;"></div>
<div class="sep" style="left:1196px;"></div>
<div class="sep" style="left:1374px;"></div>
<div class="abs" style="left:1421px;top:105px;width:0;height:0;border-left:3px solid transparent;border-right:3px solid transparent;border-top:3px solid #444;"></div>
<svg class="abs" style="left:11px;top:50px" width="36" height="36" viewBox="0 0 36 36"><path d="M17,6.500 L30.500,19 L17,32 L3.500,19 Z" fill="none" stroke="#3f97dc" stroke-width="1.4"/><path d="M18.500,13 L25,19 L18.500,25.500 L12,19 Z" fill="none" stroke="#3f97dc" stroke-width="1.4"/><rect x="18.500" y="6" width="5" height="14" rx="1.500" fill="#9a9a9a" stroke="#6a6a6a" stroke-width="0.8"/><path d="M18.800,10 L23.200,8 M18.800,13.500 L23.200,11.500 M18.800,17 L23.200,15" stroke="#d0d0d0" stroke-width="1"/><rect x="16" y="1.500" width="10" height="5.500" rx="2" fill="#cfcfcf" stroke="#777" stroke-width="0.8"/></svg>
<svg class="abs" style="left:59px;top:52px" width="17" height="18" viewBox="0 0 17 18"><rect x="1.500" y="1.500" width="13" height="15" fill="#f7f7f7" stroke="#5c5c5c" stroke-width="1.2"/><text x="8" y="8" font-family="Liberation Sans,sans-serif" font-size="5.500" font-weight="bold" fill="#3f97dc" text-anchor="middle">G1</text><text x="8" y="14" font-family="Liberation Sans,sans-serif" font-size="5.500" font-weight="bold" fill="#3f97dc" text-anchor="middle">G2</text></svg>
<svg class="abs" style="left:59px;top:76px" width="17" height="18" viewBox="0 0 17 18"><rect x="1.500" y="1.500" width="12" height="15" fill="#f7f7f7" stroke="#5c5c5c" stroke-width="1.2"/><rect x="4.500" y="4" width="5" height="2" fill="none" stroke="#5c5c5c" stroke-width="0.9"/><path d="M4,9 L11,9 M4,11.500 L11,11.500 M4,14 L11,14" stroke="#5c5c5c" stroke-width="1"/></svg>
<svg class="abs" style="left:58px;top:100px" width="18" height="18" viewBox="0 0 18 18"><path d="M1.500,8 L9,2 L16.500,8 L16.500,10.500 L9,16.500 L1.500,10.500 Z" fill="#8c8c8c" stroke="#5c5c5c" stroke-width="1"/><path d="M1.500,8 L9,2 L16.500,8 L9,14 Z" fill="#eaf3fb" stroke="#5c5c5c" stroke-width="1"/><path d="M11,5.500 Q6,6 6.500,9 Q8,11.500 11.500,9.500 M11.500,9.500 L11.800,7 M11.500,9.500 L9,9.800" fill="none" stroke="#3f97dc" stroke-width="1.3"/></svg>
<svg class="abs" style="left:158px;top:53px" width="34" height="30" viewBox="0 0 34 30"><path d="M1.500,2.500 L12,2.500 L14,5.500 L24.500,5.500 L24.500,27 L1.500,27 Z" fill="#f2f2f2" stroke="#5c5c5c" stroke-width="1.2"/><path d="M7,11 L14,4.500 L21,10.500 L21,17 L7,17 Z" fill="#dfeaf4" stroke="#5c5c5c" stroke-width="1.1"/><path d="M9.500,12.500 L32.500,12.500 L25.500,27 L1.500,27 Z" fill="#f4f4f4" stroke="#5c5c5c" stroke-width="1.2"/><path d="M9,15 L21,15 L14,21 Z" fill="#cfe0f0"/><rect x="6.500" y="11" width="2" height="3.500" fill="#3f97dc"/></svg>
<svg class="abs" style="left:196px;top:52px" width="34" height="32" viewBox="0 0 34 32"><path d="M1.500,2.500 L11,2.500 L14,6 L32.500,6 L32.500,29 L1.500,29 Z" fill="#f3f3f3" stroke="#5c5c5c" stroke-width="1.2"/><path d="M1.500,8.500 L11.500,8.500 L14,6" fill="none" stroke="#5c5c5c" stroke-width="1.2"/></svg>
<svg class="abs" style="left:237px;top:53px" width="18" height="16" viewBox="0 0 18 16"><path d="M1.500,1.500 L1.500,13.500 L12.500,13.500 L16.500,7.500 L5,7.500 L1.500,13.500" fill="#f4f4f4" stroke="#5c5c5c" stroke-width="1.1"/><path d="M1.500,1.500 L3.500,1.500 M9,3 L14,3 L14,7" fill="none" stroke="#5c5c5c" stroke-width="1.1"/><rect x="5" y="1.500" width="2.500" height="2.500" fill="#3f97dc"/><rect x="5" y="5.500" width="2.500" height="2.500" fill="#3f97dc"/><rect x="9.500" y="5.500" width="2.500" height="2.500" fill="#3f97dc"/><path d="M6,3 L6,7 L11,7" stroke="#3f97dc" stroke-width="0.8" fill="none"/></svg>
<svg class="abs" style="left:238px;top:76px" width="17" height="18" viewBox="0 0 17 18"><path d="M1.500,1.500 L10.500,1.500 L14.500,5.500 L14.500,16.500 L1.500,16.500 Z" fill="#f7f7f7" stroke="#5c5c5c" stroke-width="1.2"/><path d="M10.500,1.500 L10.500,5.500 L14.500,5.500" fill="none" stroke="#5c5c5c" stroke-width="1"/><text x="8" y="10" font-family="Liberation Sans,sans-serif" font-size="5.500" font-weight="bold" fill="#d03030" text-anchor="middle">G1</text><text x="8" y="15.500" font-family="Liberation Sans,sans-serif" font-size="5.500" font-weight="bold" fill="#d03030" text-anchor="middle">G2</text></svg>
<svg class="abs" style="left:240px;top:100px" width="12" height="18" viewBox="0 0 12 18"><rect x="4" y="1.500" width="4" height="6.500" fill="#c8c8c8" stroke="#5c5c5c" stroke-width="0.9"/><path d="M4.500,8 L6,10 L7.500,8" fill="#888" stroke="#5c5c5c" stroke-width="0.7"/><path d="M6,10 L6,15" stroke="#555" stroke-width="0.9"/><circle cx="6" cy="15.500" r="1.300" fill="#d02020"/></svg>
<svg class="abs" style="left:334px;top:51px" width="36" height="36" viewBox="0 0 36 36"><path d="M2,20 L12,11 L34,11 L34,14 L24,24 L2,24 Z" fill="#e4e4e4" stroke="#5c5c5c" stroke-width="1.1"/><path d="M2,20 L24,20 L34,11 M24,20 L24,24" fill="none" stroke="#5c5c5c" stroke-width="1"/><rect x="12.500" y="2.500" width="9" height="30" rx="4.500" fill="#a9a9a9" stroke="#6a6a6a" stroke-width="0.9"/><path d="M13,9 L21,5 M13,14 L21,10 M13,29 L21,25" stroke="#d6d6d6" stroke-width="1.6"/><rect x="12.500" y="16" width="9" height="9.500" fill="#f2f7fb" stroke="#3f97dc" stroke-width="1"/><ellipse cx="17" cy="4.500" rx="4.500" ry="2" fill="#d8d8d8" stroke="#6a6a6a" stroke-width="0.8"/></svg>
<svg class="abs" style="left:380px;top:50px" width="36" height="36" viewBox="0 0 36 36"><path d="M2,17 L18,4 L33,14 L33,19.500 L17,32.500 L2,22.500 Z" fill="#d9d9d9" stroke="#5c5c5c" stroke-width="1"/><path d="M2,17 L18,4 L33,14 L17,27 Z" fill="#3f97dc"/><path d="M3.500,19 L23,3.500 Q26.500,2 27.500,5 L7,22 Q5,25.500 8.500,26.500 L31,10" fill="none" stroke="#164f86" stroke-width="1.6"/><path d="M8,13 L24,24" stroke="#164f86" stroke-width="0" /></svg>
<svg class="abs" style="left:420px;top:53px" width="18" height="17" viewBox="0 0 18 17"><path d="M1.500,8 L9,2 L16.500,8 L16.500,10 L9,15.500 L1.500,10 Z" fill="#8a8a8a" stroke="#5c5c5c" stroke-width="1"/><path d="M1.500,8 L9,2 L16.500,8 L9,13.500 Z" fill="#f2f2f2" stroke="#5c5c5c" stroke-width="1"/><ellipse cx="9" cy="9" rx="5.500" ry="3.200" fill="#3f97dc"/><path d="M5,10 Q9,6.500 13,10" fill="none" stroke="#1d5c99" stroke-width="1.3"/><ellipse cx="9" cy="7" rx="4" ry="1.600" fill="#cfe2f3"/></svg>
<svg class="abs" style="left:420px;top:77px" width="18" height="17" viewBox="0 0 18 17"><path d="M1.500,8 L9,2 L16.500,8 L16.500,10 L9,15.500 L1.500,10 Z" fill="#8a8a8a" stroke="#5c5c5c" stroke-width="1"/><path d="M1.500,8 L9,2 L16.500,8 L9,13.500 Z" fill="#f2f2f2" stroke="#5c5c5c" stroke-width="1"/><ellipse cx="9" cy="9" rx="5.500" ry="3.200" fill="#3f97dc"/><path d="M5,10 Q9,6.500 13,10" fill="none" stroke="#1d5c99" stroke-width="1.3"/><ellipse cx="9" cy="7" rx="4" ry="1.600" fill="#cfe2f3"/></svg>
<svg class="abs" style="left:420px;top:101px" width="18" height="17" viewBox="0 0 18 17"><path d="M1.500,8 L9,2 L16.500,8 L16.500,10 L9,15.500 L1.500,10 Z" fill="#3f97dc" stroke="#3f97dc" stroke-width="1"/><path d="M1.500,8 L9,2 L16.500,8 L9,13.500 Z" fill="#fafafa" stroke="#5c5c5c" stroke-width="1"/></svg>
<svg class="abs" style="left:526px;top:51px" width="36" height="36" viewBox="0 0 36 36"><path d="M3,10 L12,3 L33,3 L33,25 L24,33 L3,33 Z" fill="#dedede" stroke="#5c5c5c" stroke-width="1.1"/><path d="M3,10 L24,10 L33,3 M24,10 L24,33" fill="none" stroke="#5c5c5c" stroke-width="0.9"/><path d="M9,12 L14,8 L28,8 L28,24 L22,28 L12,28 L9,24 Z" fill="#3f97dc"/><path d="M9,12 L14,8 L28,8 L24,12 Z" fill="#6fb4ea"/><path d="M8,17 Q13,12 17,13.500 L30,13.500 M7,24 Q12,19 16,20 L30,20" fill="none" stroke="#174e85" stroke-width="1.4"/></svg>
<svg class="abs" style="left:573px;top:53px" width="18" height="17" viewBox="0 0 18 17"><path d="M6,1.500 L15.500,1.500 L15.500,10 L12.500,14.500 L1.500,14.500 L1.500,12 L5,9.500 Z" fill="#d8d8d8" stroke="#5c5c5c" stroke-width="1"/><path d="M5,9.500 L12.500,9.500 L10,12 L1.500,12 Z" fill="#3f97dc" stroke="#1d5c99" stroke-width="0.7"/><path d="M12.500,9.500 L15.500,6" stroke="#5c5c5c" stroke-width="0.8"/></svg>
<svg class="abs" style="left:573px;top:77px" width="18" height="17" viewBox="0 0 18 17"><path d="M1.500,10 L1.500,13.500 L4,15.500 L13,15.500 L16.500,12.500 L16.500,9 Z" fill="#d4d4d4" stroke="#5c5c5c" stroke-width="1"/><ellipse cx="9" cy="10" rx="7.500" ry="3" fill="#3f97dc"/><ellipse cx="8.500" cy="7" rx="5.500" ry="2.300" fill="#5aa8e6" stroke="#1d5c99" stroke-width="0.8"/><ellipse cx="8" cy="4" rx="3.500" ry="1.800" fill="#6fb4ea" stroke="#1d5c99" stroke-width="0.8"/></svg>
<svg class="abs" style="left:573px;top:100px" width="18" height="18" viewBox="0 0 18 18"><path d="M5,2.500 L16.500,2.500 L16.500,12 L13,16.500 L1.500,16.500 Z" fill="#cfcfcf" stroke="#5c5c5c" stroke-width="1"/><path d="M5,3 L13.500,3 L10,16 L2,16 Z" fill="#3f97dc"/><path d="M3,16 Q6,14 7,9 Q8,4 10,3.500 M6,16 Q9,14 10,9 Q11,4 13,3.500 M9.500,16 Q12,14 13,9 Q14,5 15.500,4" fill="none" stroke="#14487c" stroke-width="1.1"/></svg>
<svg class="abs" style="left:662px;top:50px" width="36" height="36" viewBox="0 0 36 36"><path d="M2,14 L24,14 L33,9 L33,17 L21,30 L12,22 L2,22 Z" fill="#3f97dc"/><path d="M24,14 L33,9 L33,17 L22,26 Z" fill="#dcdcdc" stroke="#8a8a8a" stroke-width="0.8"/><path d="M2,14 L24,14 L33,9" fill="none" stroke="#6a6a6a" stroke-width="0.8"/><g transform="rotate(24 16 16)"><rect x="12" y="8" width="8" height="19" rx="3.500" fill="#a6a6a6" stroke="#666" stroke-width="0.9"/><path d="M12.500,15 L19.500,12 M12.500,20 L19.500,17 M12.500,25 L19.500,22" stroke="#dcdcdc" stroke-width="1.400"/><rect x="9" y="2" width="14" height="8" rx="3" fill="#dedede" stroke="#777" stroke-width="0.9"/></g></svg>
<svg class="abs" style="left:735px;top:49px" width="36" height="38" viewBox="0 0 36 38"><path d="M3,25 L3,29 Q17,39 32,29 L32,25 Z" fill="#ececec" stroke="#8a8a8a" stroke-width="0.9"/><ellipse cx="17.500" cy="25" rx="14.500" ry="7" fill="#3f97dc"/><g transform="rotate(22 19 16)"><rect x="15" y="9" width="7.500" height="18" rx="3.500" fill="#a6a6a6" stroke="#666" stroke-width="0.9"/><path d="M15.500,16 L22,13 M15.500,21 L22,18 M15.500,25.500 L22,22.500" stroke="#dcdcdc" stroke-width="1.400"/><rect x="12" y="3" width="14" height="8" rx="3" fill="#e0e0e0" stroke="#777" stroke-width="0.9"/></g></svg>
<svg class="abs" style="left:812px;top:52px" width="34" height="32" viewBox="0 0 34 32"><path d="M2,5.500 L14,5.500 L20,13 L32,13 L32,24 L22,24 L17,30 L2,30 Z" fill="#f1f1f1"/><path d="M2,26 L17,26 L22,21 L32,21 L32,24 L22,24.500 L17,30 L2,30 Z" fill="#c9c9c9"/><path d="M2,5.500 L14,5.500 L20,13 L32,13 L32,22" fill="none" stroke="#5c5c5c" stroke-width="1.200"/><path d="M17,26 L17,12" stroke="#999" stroke-width="0.8"/><path d="M2,2.500 L32,2.500 M17,5.500 L32,5.500 M19,8 L32,8 M21,10.500 L32,10.500" stroke="#3f97dc" stroke-width="1.100"/></svg>
<svg class="abs" style="left:854px;top:52px" width="34" height="32" viewBox="0 0 34 32"><path d="M2,6 L14,6 L22,15 L32,15 L32,24 L22,24 L17,30 L2,30 Z" fill="#f1f1f1"/><path d="M2,26 L17,26 L22,21 L32,21 L32,24 L22,24.500 L17,30 L2,30 Z" fill="#c9c9c9"/><path d="M2,6 L14,6 L22,15 L32,15 L32,22" fill="none" stroke="#5c5c5c" stroke-width="1.200"/><path d="M3,1 L3,3.500 M5.500,1 L5.500,3.500 M8,1 L8,3.500 M10.500,1 L10.500,3.500 M13,1 L13,3.500 M15.500,1 L15.500,5 M18,1 L18,7.500 M20.500,1 L20.500,10 M23,1 L23,12.500 M25.500,1 L25.500,12.500 M28,1 L28,12.500 M30.500,1 L30.500,12.500" stroke="#3f97dc" stroke-width="1"/><path d="M14,6 L22,15 L32,15" fill="none" stroke="#3f97dc" stroke-width="0" /></svg>
<svg class="abs" style="left:898px;top:53px" width="18" height="17" viewBox="0 0 18 17"><path d="M1.500,3.500 L12,3.500 L12,12 L1.500,12" fill="#f3f3f3" stroke="#5c5c5c" stroke-width="1"/><path d="M1.500,12 L12,12 L12,14 L1.500,14 Z" fill="#c4c4c4"/><path d="M15,1 L15,15 M13,3 L15,3" stroke="#3f97dc" stroke-width="1.300"/></svg>
<svg class="abs" style="left:898px;top:77px" width="18" height="17" viewBox="0 0 18 17"><path d="M1.500,3 L4,3 L4,14 L1.500,14" fill="none" stroke="#5c5c5c" stroke-width="1"/><path d="M7,1 L7,6 M7,9 L7,15" stroke="#5c5c5c" stroke-width="1"/><path d="M9.500,3 L9.500,13 L12,13 L12,10.500 L16,10.500 L16,5.500 L12,5.500 L12,3 Z" fill="#58a8e8" stroke="#3f97dc" stroke-width="0.8"/></svg>
<svg class="abs" style="left:898px;top:101px" width="18" height="17" viewBox="0 0 18 17"><path d="M1,2 L17,2" stroke="#3f97dc" stroke-width="1.200"/><path d="M2,5 L3.500,7.500 L5,5 L6.500,7.500 L8,5 L9.500,7.500 L11,5 L12.500,7.500 L14,5 L15.500,7.500 L16.500,5" fill="none" stroke="#3f97dc" stroke-width="1"/><path d="M4,15 L4,9 M6.500,15 L6.500,9 M9,15 L9,9 M11.500,15 L11.500,9 M14,15 L14,9" stroke="#5c5c5c" stroke-width="1.100"/><path d="M1,15.500 L17,15.500" stroke="#888" stroke-width="1.200"/></svg>
<svg class="abs" style="left:978px;top:52px" width="34" height="32" viewBox="0 0 34 32"><path d="M3,7.500 L31,7.500" stroke="#5c5c5c" stroke-width="1.100"/><rect x="13" y="1.500" width="8" height="10.500" fill="#ececec" stroke="#5c5c5c" stroke-width="1"/><path d="M14,12 L20,12 L19,16.500 L15,16.500 Z" fill="#bdbdbd" stroke="#5c5c5c" stroke-width="0.800"/><path d="M17,16.500 L17,27.500" stroke="#d02020" stroke-width="1.100"/><path d="M3,28.500 L31,28.500" stroke="#555" stroke-width="1.800"/></svg>
<svg class="abs" style="left:1052px;top:50px" width="36" height="36" viewBox="0 0 36 36"><path d="M18,2.500 L31.500,10 L31.500,26 L18,33.500 L4.500,26 L4.500,10 Z" fill="#f4f9fd" stroke="#3f97dc" stroke-width="1.500"/><path d="M18,7.500 L27,12.500 L18,17.500 L9,12.500 Z" fill="#f6f6f6" stroke="#9a9a9a" stroke-width="0.6"/><path d="M9,12.500 L18,17.500 L18,28.500 L9,23.500 Z" fill="#d6d6d6" stroke="#9a9a9a" stroke-width="0.6"/><path d="M27,12.500 L18,17.500 L18,28.500 L27,23.500 Z" fill="#b9b9b9" stroke="#9a9a9a" stroke-width="0.6"/></svg>
<svg class="abs" style="left:1114px;top:52px" width="18" height="18" viewBox="0 0 18 18"><path d="M1.500,5.500 L5,1.500 L16.500,1.500 L16.500,12 L13,16 L1.500,16 Z" fill="#f8f8f8" stroke="#5c5c5c" stroke-width="1"/><rect x="1.500" y="5.500" width="11.500" height="10.500" fill="#58a8e8"/><path d="M1.500,5.500 L13,5.500 L16.500,1.500 M13,5.500 L13,16 M5,1.500 L5,12 L1.500,16 M5,12 L16.500,12" fill="none" stroke="#5c5c5c" stroke-width="0.900"/></svg>
<svg class="abs" style="left:1114px;top:76px" width="18" height="18" viewBox="0 0 18 18"><path d="M1.500,5.500 L5,1.500 L16.500,1.500 L16.500,12 L13,16 L1.500,16 Z" fill="#f8f8f8" stroke="#5c5c5c" stroke-width="1"/><path d="M13,5.500 L16.500,1.500 L16.500,12 L13,16 Z" fill="#58a8e8"/><path d="M1.500,5.500 L13,5.500 L16.500,1.500 M13,5.500 L13,16 M5,1.500 L5,12 L1.500,16 M5,12 L16.500,12" fill="none" stroke="#5c5c5c" stroke-width="0.900"/></svg>
<svg class="abs" style="left:1114px;top:100px" width="18" height="18" viewBox="0 0 18 18"><path d="M1.500,5.500 L5,1.500 L16.500,1.500 L16.500,12 L13,16 L1.500,16 Z" fill="#f8f8f8" stroke="#5c5c5c" stroke-width="1"/><path d="M1.500,5.500 L5,1.500 L16.500,1.500 L13,5.500 Z" fill="#58a8e8"/><path d="M1.500,5.500 L13,5.500 L16.500,1.500 M13,5.500 L13,16 M5,1.500 L5,12 L1.500,16 M5,12 L16.500,12" fill="none" stroke="#5c5c5c" stroke-width="0.900"/></svg>
<svg class="abs" style="left:1217px;top:52px" width="34" height="32" viewBox="0 0 34 32"><path d="M1.500,2.500 L9,2.500 L12,6 L32.500,6 L32.500,29 L1.500,29 Z" fill="#f3f3f3" stroke="#5c5c5c" stroke-width="1.200"/><path d="M1.500,8.500 L10,8.500 L12,6" fill="none" stroke="#5c5c5c" stroke-width="1.100"/><rect x="14.500" y="12" width="5" height="15" rx="2" fill="#a0a0a0" stroke="#666" stroke-width="0.800"/><path d="M15,18 L19,16 M15,22 L19,20 M15,26 L19,24" stroke="#dcdcdc" stroke-width="1.100"/><rect x="12" y="9" width="10" height="4.500" rx="1.800" fill="#d4d4d4" stroke="#777" stroke-width="0.800"/></svg>
<svg class="abs" style="left:1272px;top:52px" width="18" height="17" viewBox="0 0 18 17"><rect x="1.500" y="1.500" width="14" height="13.500" fill="#fafafa" stroke="#5c5c5c" stroke-width="1.100"/><rect x="1.500" y="1.500" width="14" height="2.200" fill="#5a5a5a"/><rect x="3.500" y="6" width="1.800" height="1.800" fill="#3f97dc"/><rect x="3.500" y="10" width="1.800" height="1.800" fill="#3f97dc"/><path d="M7,7 L13.500,7 M7,11 L13.500,11" stroke="#3f97dc" stroke-width="1.100"/></svg>
<svg class="abs" style="left:1272px;top:76px" width="18" height="18" viewBox="0 0 18 18"><rect x="1.500" y="1.500" width="14.500" height="14.500" fill="#fafafa" stroke="#5c5c5c" stroke-width="1.100"/><rect x="1.500" y="1.500" width="14.500" height="2.200" fill="#5a5a5a"/><text x="8.800" y="10.500" font-family="Liberation Sans,sans-serif" font-size="6.500" fill="#444" text-anchor="middle">%</text><rect x="3.500" y="12" width="10.500" height="2.400" fill="#eee" stroke="#888" stroke-width="0.500"/><rect x="3.500" y="12" width="5.500" height="2.400" fill="#3f97dc"/></svg>
<svg class="abs" style="left:1407px;top:51px" width="34" height="34" viewBox="0 0 34 34"><circle cx="17" cy="17" r="15.300" fill="#f7f7f7" stroke="#555" stroke-width="1.200"/><text x="17" y="25.500" font-family="Liberation Sans,sans-serif" font-size="24" fill="#555" text-anchor="middle">?</text></svg>
<svg class="abs" style="left:8px;top:0px" width="14" height="24" viewBox="0 0 14 24"><path d="M2,1.500 L11,1.500 L11,4.500 L8.500,5 L8.500,11.500 L11,12 L11,15 L2,15 L2,12 L4.500,11.500 L4.500,5 L2,4.500 Z" fill="#d9822b"/><path d="M4.500,5 L8.500,5 L8.500,11.500 L4.500,11.500 Z" fill="#b8651a"/><path d="M2,1.500 L11,1.500 L11,3 L2,3 Z" fill="#efa758"/><text x="6.500" y="21.500" font-family="Liberation Sans,sans-serif" font-size="5.500" font-weight="bold" fill="#333" text-anchor="middle">PRO</text></svg>
<svg class="abs" style="left:32px;top:3px" width="20" height="16" viewBox="0 0 20 16"><path d="M1.500,2.500 L12,2.500 L16.500,7 L16.500,14 L1.500,14 Z" fill="#fafafa" stroke="#444" stroke-width="1.200"/><path d="M12,2.500 L12,7 L16.500,7" fill="none" stroke="#444" stroke-width="1"/></svg>
<div class="abs" style="left:56px;top:10px;width:0;height:0;border-left:3px solid transparent;border-right:3px solid transparent;border-top:3.500px solid #555;"></div>
<svg class="abs" style="left:68px;top:3px" width="20" height="16" viewBox="0 0 20 16"><path d="M1.500,13.500 L1.500,2.500 L6,2.500 L7.500,4.500 L13.500,4.500 L13.500,7" fill="#f2f2f2" stroke="#444" stroke-width="1.200"/><path d="M1.500,13.500 L5,7 L17.500,7 L14,13.500 Z" fill="#fafafa" stroke="#444" stroke-width="1.200"/></svg>
<svg class="abs" style="left:92px;top:2px" width="18" height="18" viewBox="0 0 18 18"><path d="M1.500,1.500 L16.500,1.500 L16.500,16.500 L1.500,16.500 Z" fill="#555" stroke="#3a3a3a" stroke-width="1"/><rect x="4.500" y="2" width="9" height="6.500" fill="#e8e8e8"/><rect x="10" y="3" width="2" height="4.500" fill="#555"/><rect x="4" y="11" width="10" height="5.500" fill="#dcdcdc"/><rect x="5.500" y="13" width="3" height="1.500" fill="#555"/></svg>
<svg class="abs" style="left:116px;top:3px" width="20" height="16" viewBox="0 0 20 16"><path d="M2,7.500 L8.500,2 L8.500,5 Q17,4.500 17.500,13 Q14,9.500 8.500,10 L8.500,13 Z" fill="#fafafa" stroke="#444" stroke-width="1.200" stroke-linejoin="round"/></svg>
<div class="abs" style="left:139px;top:10px;width:0;height:0;border-left:3px solid transparent;border-right:3px solid transparent;border-top:3.500px solid #555;"></div>
<svg class="abs" style="left:151px;top:3px" width="20" height="16" viewBox="0 0 20 16"><path d="M18,7.500 L11.500,2 L11.500,5 Q3,4.500 2.500,13 Q6,9.500 11.500,10 L11.500,13 Z" fill="#e6e6e6" stroke="#b0b0b0" stroke-width="1.200" stroke-linejoin="round"/></svg>
<div class="abs" style="left:175px;top:10px;width:0;height:0;border-left:3px solid transparent;border-right:3px solid transparent;border-top:3.500px solid #999;"></div>
<svg class="abs" style="left:187px;top:2px" width="20" height="18" viewBox="0 0 20 18"><path d="M2,9.500 L10,2 L18,9.500" fill="none" stroke="#333" stroke-width="1.500"/><path d="M4.500,8.500 L4.500,16.500 L15.500,16.500 L15.500,8.500 L10,3.500 Z" fill="#fafafa" stroke="#333" stroke-width="1.200"/><rect x="9" y="11.500" width="3" height="5" fill="none" stroke="#333" stroke-width="1"/><path d="M14,3 L14,6" stroke="#333" stroke-width="1.500"/></svg>
<svg class="abs" style="left:212px;top:2px" width="20" height="18" viewBox="0 0 20 18"><path d="M7,1.500 L2,9.500 L6,9.500 L3,16 L10,7 L6.500,7 L10,1.500 Z" fill="#bdbdbd"/><path d="M9,9.500 L14.500,9.500 L17.500,12 L17.500,16.500 L9,16.500 Z" fill="#f2f2f2" stroke="#a8a8a8" stroke-width="1"/></svg>
<div class="abs" style="left:235px;top:10px;width:0;height:0;border-left:3px solid transparent;border-right:3px solid transparent;border-top:3.500px solid #555;"></div>
<svg class="abs" style="left:247px;top:2px" width="20" height="18" viewBox="0 0 20 18"><rect x="2" y="2" width="7.500" height="14.500" rx="1" fill="#f4f4f4" stroke="#6a8a6a" stroke-width="1"/><rect x="2" y="9" width="12" height="7.500" fill="#4caf50" stroke="#3b8a40" stroke-width="0.800"/><path d="M13,8 L13,16 L15,14 L16.500,17 L17.500,16.500 L16,13.500 L18.500,13.500 Z" fill="#fff" stroke="#222" stroke-width="0.800"/></svg>
<div class="abs" style="left:269px;top:10px;width:0;height:0;border-left:3px solid transparent;border-right:3px solid transparent;border-top:3.500px solid #555;"></div>
<svg class="abs" style="left:282px;top:2px" width="20" height="18" viewBox="0 0 20 18"><rect x="3" y="1.500" width="7" height="7.500" rx="2" fill="#e9e9e9" stroke="#b5b5b5" stroke-width="1"/><rect x="11" y="9" width="7" height="7.500" rx="1.500" fill="#cfcfcf" stroke="#bdbdbd" stroke-width="1"/><path d="M4.500,11 L4.500,14 L9,14 M7.500,12.500 L9,14 L7.500,15.500" fill="none" stroke="#8a8a8a" stroke-width="1"/></svg>
<svg class="abs" style="left:307px;top:2px" width="20" height="20" viewBox="0 0 20 20"><defs><pattern id="chk" width="7" height="7" patternUnits="userSpaceOnUse" patternTransform="rotate(45 10 9.500)"><rect width="7" height="7" fill="#fafafa"/><rect width="3.500" height="3.500" fill="#222"/><rect x="3.500" y="3.500" width="3.500" height="3.500" fill="#222"/></pattern></defs><circle cx="10" cy="9.500" r="8" fill="url(#chk)" stroke="#222" stroke-width="1.500"/></svg>
<div class="abs" style="left:328px;top:1px;width:100px;height:20px;background:#f1f1f1;"></div>
<div class="t" style="left:332px;top:4px;font-size:12px;font-style:italic;color:#8a8a8a;">Material</div>
<div class="abs" style="left:418px;top:9px;width:0;height:0;border-left:4px solid transparent;border-right:4px solid transparent;border-top:5px solid #444;"></div>
<svg class="abs" style="left:432px;top:3px" width="16" height="16" viewBox="0 0 16 16"><path d="M8,8 L8.00,0.00 A8,8 0 0 1 14.93,4.00 Z" fill="#e8442e"/><path d="M8,8 L14.93,4.00 A8,8 0 0 1 14.93,12.00 Z" fill="#f59a23"/><path d="M8,8 L14.93,12.00 A8,8 0 0 1 8.00,16.00 Z" fill="#f3d02c"/><path d="M8,8 L8.00,16.00 A8,8 0 0 1 1.07,12.00 Z" fill="#6cc04a"/><path d="M8,8 L1.07,12.00 A8,8 0 0 1 1.07,4.00 Z" fill="#3aa0d8"/><path d="M8,8 L1.07,4.00 A8,8 0 0 1 8.00,0.00 Z" fill="#7a55c7"/></svg>
<div class="abs" style="left:452px;top:1px;width:100px;height:20px;background:#f1f1f1;"></div>
<div class="t" style="left:456px;top:4px;font-size:12px;font-style:italic;color:#8a8a8a;">Appearance</div>
<div class="abs" style="left:541px;top:9px;width:0;height:0;border-left:4px solid transparent;border-right:4px solid transparent;border-top:5px solid #444;"></div>
<svg class="abs" style="left:556px;top:3px" width="18" height="18" viewBox="0 0 18 18"><path d="M7,7 L7.00,0.00 A7,7 0 0 1 13.06,3.50 Z" fill="#e8442e"/><path d="M7,7 L13.06,3.50 A7,7 0 0 1 13.06,10.50 Z" fill="#f59a23"/><path d="M7,7 L13.06,10.50 A7,7 0 0 1 7.00,14.00 Z" fill="#f3d02c"/><path d="M7,7 L7.00,14.00 A7,7 0 0 1 0.94,10.50 Z" fill="#6cc04a"/><path d="M7,7 L0.94,10.50 A7,7 0 0 1 0.94,3.50 Z" fill="#3aa0d8"/><path d="M7,7 L0.94,3.50 A7,7 0 0 1 7.00,0.00 Z" fill="#7a55c7"/><path d="M10,13 L16,13 L13,16.500 Z" fill="#2a7fd0"/></svg>
<svg class="abs" style="left:580px;top:3px" width="18" height="18" viewBox="0 0 18 18"><path d="M7,7 L7.00,0.00 A7,7 0 0 1 13.06,3.50 Z" fill="#e8442e"/><path d="M7,7 L13.06,3.50 A7,7 0 0 1 13.06,10.50 Z" fill="#f59a23"/><path d="M7,7 L13.06,10.50 A7,7 0 0 1 7.00,14.00 Z" fill="#f3d02c"/><path d="M7,7 L7.00,14.00 A7,7 0 0 1 0.94,10.50 Z" fill="#6cc04a"/><path d="M7,7 L0.94,10.50 A7,7 0 0 1 0.94,3.50 Z" fill="#3aa0d8"/><path d="M7,7 L0.94,3.50 A7,7 0 0 1 7.00,0.00 Z" fill="#7a55c7"/><path d="M10.500,11 L16,16.500 M16,11 L10.500,16.500" stroke="#e02020" stroke-width="1.800"/></svg>
<div class="t" style="left:604px;top:2px;font-size:15px;font-style:italic;font-family:'Liberation Serif',serif;color:#444;line-height:16px;">fx</div>
<svg class="abs" style="left:628px;top:3px" width="16" height="16" viewBox="0 0 16 16"><path d="M8,2 L8,14 M2,8 L14,8" stroke="#b5b5b5" stroke-width="2.600"/></svg>
<svg class="abs" style="left:650px;top:5px" width="12" height="12" viewBox="0 0 12 12"><path d="M2,2.500 L10,2.500" stroke="#444" stroke-width="1.200"/><path d="M2.500,5.500 L9.500,5.500 L6,9.500 Z" fill="#444"/></svg>
<svg class="abs" style="left:1017px;top:29px" width="28" height="14" viewBox="0 0 28 14"><rect x="1.500" y="2.500" width="13" height="8" rx="2.500" fill="#fafafa" stroke="#333" stroke-width="1.100"/><path d="M5.500,8 L8,5 L10.500,8 Z" fill="#333"/><path d="M19.500,6 L24.500,6 L22,9 Z" fill="#333"/></svg>
<svg class="abs" style="left:1421px;top:5px" width="8" height="12" viewBox="0 0 8 12"><path d="M2,1.500 L6,6 L2,10.500 Z" fill="#555"/></svg>
<svg class="abs" style="left:1617px;top:2px" width="18" height="20" viewBox="0 0 18 20"><circle cx="9" cy="6" r="4" fill="#e6eefc" stroke="#2a4fb0" stroke-width="1.200"/><path d="M1.500,18 Q2,11.500 6.500,11 L9,13 L11.500,11 Q16,11.500 16.500,18 Z" fill="#e6eefc" stroke="#2a4fb0" stroke-width="1.200"/></svg>
<div class="abs" style="left:1724px;top:10px;width:0;height:0;border-left:3px solid transparent;border-right:3px solid transparent;border-top:3.500px solid #666;"></div>
<svg class="abs" style="left:1738px;top:2px" width="20" height="18" viewBox="0 0 20 18"><path d="M1.500,3 L4.500,3 L7,11.500 L15.500,11.500 L17.500,5.500 L5.500,5.500" fill="none" stroke="#333" stroke-width="1.200"/><path d="M8,5.500 L9,11.500 M11.500,5.500 L11.500,11.500 M14.500,5.500 L14,11.500 M6,8.500 L16.500,8.500" stroke="#333" stroke-width="0.700"/><circle cx="8" cy="14.500" r="1.600" fill="none" stroke="#333" stroke-width="1"/><circle cx="14.500" cy="14.500" r="1.600" fill="none" stroke="#333" stroke-width="1"/></svg>
<div class="abs" style="left:1765px;top:3px;width:1px;height:17px;background:#c8c8c8;"></div>
<svg class="abs" style="left:1774px;top:2px" width="18" height="18" viewBox="0 0 18 18"><circle cx="9" cy="9" r="7.300" fill="#f7f7f7" stroke="#333" stroke-width="1.200"/><text x="9" y="13.500" font-family="Liberation Sans,sans-serif" font-size="12" font-weight="bold" fill="#2a4fb0" text-anchor="middle">?</text></svg>
<div class="abs" style="left:1797px;top:10px;width:0;height:0;border-left:3px solid transparent;border-right:3px solid transparent;border-top:3.500px solid #777;"></div>
<svg class="abs" style="left:1852px;top:10px" width="10" height="8" viewBox="0 0 10 8"><path d="M1.500,5.500 L9,5.500" stroke="#222" stroke-width="1.600"/></svg>
<svg class="abs" style="left:1875px;top:4px" width="14" height="14" viewBox="0 0 14 14"><rect x="4.500" y="2.500" width="8" height="6" fill="none" stroke="#222" stroke-width="1.300"/><rect x="1.500" y="5.500" width="8" height="6" fill="#dcdcdc" stroke="#222" stroke-width="1.300"/></svg>
<svg class="abs" style="left:1900px;top:4px" width="14" height="14" viewBox="0 0 14 14"><path d="M2,2 L12,12 M12,2 L2,12" stroke="#222" stroke-width="1.700"/></svg>
<div class="abs" style="left:0;top:140px;width:264px;height:24px;background:#dadada;"></div>
<div class="abs" style="left:0;top:140px;width:36px;height:24px;background:#cfcfcf;"></div>
<div class="abs" style="left:36px;top:140px;width:52px;height:24px;background:#f0f0f0;"></div>
<div class="t" style="left:3px;top:145px;font-size:11px;color:#7a7a7a;">Model</div>
<div class="t" style="left:40px;top:145px;font-size:11px;color:#333;">CAM</div>
<svg class="abs" style="left:68px;top:146px" width="14" height="12"><path d="M2.500,1.500 L11,10.500 M11,1.500 L2.500,10.500" stroke="#444" stroke-width="1.4" fill="none"/></svg>
<svg class="abs" style="left:91px;top:146px" width="14" height="12"><path d="M6.500,1 L6.500,11.500 M1.500,6.200 L11.500,6.200" stroke="#444" stroke-width="1.6" fill="none"/></svg>
<svg class="abs" style="left:240px;top:145px" width="16" height="14"><path d="M1,2.500 L15,2.500 M1,7.500 L15,7.500 M1,12.500 L15,12.500" stroke="#555" stroke-width="1.6" fill="none"/></svg>
<div class="abs" style="left:260px;top:140px;width:4px;height:916px;background:#bababa;"></div>
<div class="abs" style="left:259px;top:164px;width:1px;height:892px;background:#e4e4e4;"></div>
<div class="t" style="left:5px;top:168px;font-size:11px;color:#333;">Simulation</div>
<div class="abs" style="left:1px;top:214px;width:255px;height:804px;background:#fff;border:1px solid #dcdcdc;"></div>
<div class="abs" style="left:2px;top:190px;width:71px;height:24px;background:#ececec;border:1px solid #d9d9d9;border-bottom:none;"></div>
<div class="abs" style="left:138px;top:190px;width:78px;height:24px;background:#ececec;border:1px solid #d9d9d9;border-bottom:none;"></div>
<div class="abs" style="left:75px;top:188px;width:62px;height:27px;background:#fff;border:1px solid #e2e2e2;border-bottom:none;"></div>
<div class="t" style="left:35px;top:196px;font-size:11px;color:#1a1a1a;">Display</div>
<div class="t" style="left:109px;top:194px;font-size:11px;color:#1a1a1a;">Info</div>
<div class="t" style="left:169px;top:196px;font-size:11px;color:#1a1a1a;">Statistics</div>
<svg class="abs" style="left:13px;top:193px" width="20" height="20"><path d="M2,12 L9,7 L17,12 L9,17 Z" fill="#e8e8e8" stroke="#777" stroke-width="1"/><path d="M5,12 L9,9.500 L13,12 L9,14.500 Z" fill="#cfe2f2" stroke="#5a8fc0" stroke-width="0.8"/><rect x="6.500" y="3" width="6" height="8" rx="1.500" fill="#c9c9c9" stroke="#777" stroke-width="0.9"/><ellipse cx="9.500" cy="3.500" rx="3.500" ry="1.500" fill="#e4e4e4" stroke="#777" stroke-width="0.8"/></svg>
<svg class="abs" style="left:87px;top:192px" width="20" height="20"><path d="M2.500,4 L2.500,8 Q3,9 4,9.500 L4,15 Q7,18 10,15 L10,9.500 Q11.500,9 11.500,8 L11.500,4 Z" fill="#c8c8c8" stroke="#666" stroke-width="0.9"/><ellipse cx="7" cy="4" rx="4.500" ry="1.800" fill="#e6e6e6" stroke="#666" stroke-width="0.8"/><path d="M5,11 L8,10 M5,13.500 L8,12.500" stroke="#888" stroke-width="0.8"/><text x="11" y="16" font-family="Liberation Sans, sans-serif" font-size="8" font-weight="bold" fill="#4a8fd0">#</text></svg>
<svg class="abs" style="left:147px;top:194px" width="20" height="20"><path d="M2.500,4 L2.500,8 Q3,9 4,9.500 L4,15 Q7,18 10,15 L10,9.500 Q11.500,9 11.500,8 L11.500,4 Z" fill="#c8c8c8" stroke="#666" stroke-width="0.9"/><ellipse cx="7" cy="4" rx="4.500" ry="1.800" fill="#e6e6e6" stroke="#666" stroke-width="0.8"/><path d="M5,11 L8,10 M5,13.500 L8,12.500" stroke="#888" stroke-width="0.8"/><text x="11" y="16" font-family="Liberation Sans, sans-serif" font-size="8" font-weight="bold" fill="#4a8fd0">#</text></svg>
<div class="hdr" style="top:222px;"><span>Position</span></div>
<svg class="abs" style="left:235px;top:226px" width="10" height="12"><path d="M1,5 L4.500,1.500 L8,5 M1,9.500 L4.500,6 L8,9.500" stroke="#fff" stroke-width="1.3" fill="none"/></svg>
<div class="gb" style="top:242px;height:151px;"></div>
<div class="lab" style="top:256px;">X position:</div>
<div class="fld fr" style="top:252px;"><span>125.011 mm</span></div>
<div class="lab" style="top:279px;">Y position:</div>
<div class="fld fr" style="top:275px;"><span>-43.2266 mm</span></div>
<div class="lab" style="top:302px;">Z position:</div>
<div class="fld fr" style="top:298px;"><span>41.5994 mm</span></div>
<div class="lab" style="top:325px;">Spindle speed:</div>
<div class="fld fr" style="top:321px;"><span>30000 rpm CW</span></div>
<div class="lab" style="top:348px;">Feedrate:</div>
<div class="fld fr" style="top:344px;"><span>1800 mm/min</span></div>
<div class="lab" style="top:371px;">Movement:</div>
<div class="fld fr" style="top:367px;"><span>Cutting</span></div>
<div class="hdr" style="top:410px;"><span>Operation</span></div>
<svg class="abs" style="left:235px;top:414px" width="10" height="12"><path d="M1,5 L4.500,1.500 L8,5 M1,9.500 L4.500,6 L8,9.500" stroke="#fff" stroke-width="1.3" fill="none"/></svg>
<div class="gb" style="top:430px;height:151px;"></div>
<div class="lab" style="top:444px;">Description:</div>
<div class="fld fl" style="top:440px;"><span>Parallel3</span></div>
<div class="lab" style="top:467px;">Type:</div>
<div class="fld fl" style="top:463px;"><span>Parallel</span></div>
<div class="lab" style="top:490px;">Tool:</div>
<div class="fld fl" style="top:486px;"><span>#20 - Ø10 mm ball</span></div>
<div class="lab" style="top:513px;">Work offset:</div>
<div class="fld fl" style="top:509px;"><span>#0</span></div>
<div class="lab" style="top:536px;">Setup:</div>
<div class="fld fl" style="top:532px;"><span>Setup1</span></div>
<div class="lab" style="top:559px;">Time:</div>
<div class="fld fl" style="top:555px;"><span>0:06:59 (20.1%) New...</span></div>
<div class="hdr" style="top:598px;"><span>Machine</span></div>
<svg class="abs" style="left:235px;top:602px" width="10" height="12"><path d="M1,1.500 L4.500,5 L8,1.500 M1,6 L4.500,9.500 L8,6" stroke="#fff" stroke-width="1.3" fill="none"/></svg>
<div class="hdr" style="top:633px;"><span>Verification</span></div>
<svg class="abs" style="left:235px;top:637px" width="10" height="12"><path d="M1,5 L4.500,1.500 L8,5 M1,9.500 L4.500,6 L8,9.500" stroke="#fff" stroke-width="1.3" fill="none"/></svg>
<div class="gb" style="top:653px;height:105px;"></div>
<div class="lab" style="top:667px;">Detected collisions:</div>
<div class="fld fr" style="top:663px;"><span>None</span></div>
<div class="lab" style="top:690px;">Volume:</div>
<div class="fld fr" style="top:686px;"><span>1.1057 dm^3 (81.9%)</span></div>
<div class="lab" style="top:713px;">Start volume:</div>
<div class="fld fr" style="top:709px;"><span>1.34956 dm^3</span></div>
<div class="lab" style="top:736px;">Distance:</div>
<div class="fld fr" style="top:732px;"><span>Unavailable</span></div>
<div class="abs" style="left:180px;top:1028px;width:71px;height:19px;border:1px solid #adadad;background:#e1e1e1;font-size:11px;line-height:21px;text-align:center;color:#111;">Close</div>
<div class="abs" style="left:264px;top:1032px;width:1656px;height:24px;background:#dbdbdb;"></div>
<div class="abs" style="left:0;top:1056px;width:1920px;height:24px;background:#f0f0f0;"></div>
<div class="t" style="left:1px;top:1062px;font-size:12px;color:#333;letter-spacing:-0.35px;">For Help, press F1</div>
<div class="t" style="left:1851px;top:1062px;font-size:12px;color:#333;">13</div>
<div class="t" style="left:1888px;top:1062px;font-size:12px;color:#333;">9</div>
<div class="abs" style="left:1839px;top:1058px;width:1px;height:21px;background:#dcdcdc;"></div>
<div class="abs" style="left:1871px;top:1058px;width:1px;height:21px;background:#dcdcdc;"></div>
<svg class="abs" style="left:267px;top:1033px" width="18" height="18"><path d="M2,9 L9,2 L16,9 M4,8 L4,15.500 L14,15.500 L14,8 M12,3.500 L12,5.500" stroke="#444" stroke-width="1.3" fill="#f4f4f4"/><rect x="8" y="10.500" width="3" height="4" fill="none" stroke="#444" stroke-width="0.9"/></svg>
<svg class="abs" style="left:1899px;top:1036px" width="16" height="14"><path d="M1,2.500 L15,2.500 M1,7 L15,7 M1,11.500 L15,11.500" stroke="#666" stroke-width="1.6" fill="none"/></svg>

</body>
</html>
